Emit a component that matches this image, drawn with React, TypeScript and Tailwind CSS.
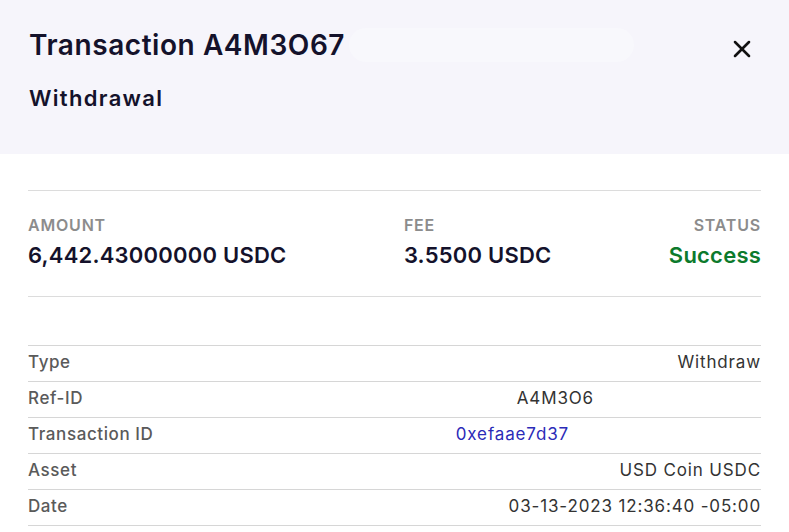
import { X } from "lucide-react";

type DetailRow = {
  label: string;
  value: string;
  link?: boolean;
  pad?: string;
};

const rows: DetailRow[] = [
  { label: "Type", value: "Withdraw" },
  { label: "Ref-ID", value: "A4M3O6", pad: "w-[167px]" },
  { label: "Transaction ID", value: "0xefaae7d37", link: true, pad: "w-[192px]" },
  { label: "Asset", value: "USD Coin USDC" },
  { label: "Date", value: "03-13-2023 12:36:40 -05:00" },
];

function Stat({
  label,
  value,
  align = "left",
  tone = "text-[#14122b]",
}: {
  label: string;
  value: string;
  align?: "left" | "right";
  tone?: string;
}) {
  return (
    <div className={align === "right" ? "text-right" : "text-left"}>
      <p className="text-[16px] font-semibold uppercase leading-5 tracking-[0.05em] text-[#8c8c8c]">
        {label}
      </p>
      <p
        className={`mt-[6px] text-[22px] font-semibold leading-7 tracking-[0.01em] ${tone}`}
      >
        {value}
      </p>
    </div>
  );
}

export default function App() {
  return (
    <div
      className="h-[532px] w-[789px] overflow-hidden bg-white"
      style={{ fontFamily: "Inter, 'Noto Sans', sans-serif" }}
    >
      <header className="relative h-[154px] bg-[#f6f5fb] px-[29px] pt-[27px]">
        <div className="flex items-start justify-between">
          <h1 className="flex items-center text-[28px] font-semibold leading-9 tracking-[0.02em] text-[#14122b]">
            Transaction A4M3O67
            <span className="ml-[4px] inline-block h-[34px] w-[285px] rounded-full bg-[#f8f8fc]" />
          </h1>
          <button
            type="button"
            aria-label="Close"
            className="mr-[4px] mt-[8px] text-[#111]"
          >
            <X size={28} strokeWidth={2.2} />
          </button>
        </div>
        <p className="mt-[21px] text-[22px] font-semibold leading-7 tracking-[0.06em] text-[#14122b]">
          Withdrawal
        </p>
      </header>

      <div className="px-[28px] pt-[36px]">
        <div className="border-t border-[#dcdcdc]" />

        <div className="flex items-start justify-between pb-[27px] pt-[24px]">
          <Stat label="Amount" value="6,442.43000000 USDC" />
          <Stat label="Fee" value="3.5500 USDC" />
          <Stat label="Status" value="Success" align="right" tone="text-[#0c7a2c]" />
        </div>

        <div className="border-t border-[#dcdcdc]" />

        <div className="mt-[48px] border-t border-[#d6d6d6]">
          {rows.map((row) => (
            <div
              key={row.label}
              className="flex h-[36px] items-center justify-between border-b border-[#d6d6d6] pb-[3px] text-[17px] leading-5 tracking-[0.035em]"
            >
              <span className="font-medium text-[#5a5a5a]">{row.label}</span>
              <span className="flex items-center tracking-[0.05em]">
                <span
                  className={
                    row.link ? "text-[#2b2bb8]" : "text-[#333333]"
                  }
                >
                  {row.value}
                </span>
                {row.pad ? <span className={`inline-block ${row.pad}`} /> : null}
              </span>
            </div>
          ))}
        </div>
      </div>
    </div>
  );
}
